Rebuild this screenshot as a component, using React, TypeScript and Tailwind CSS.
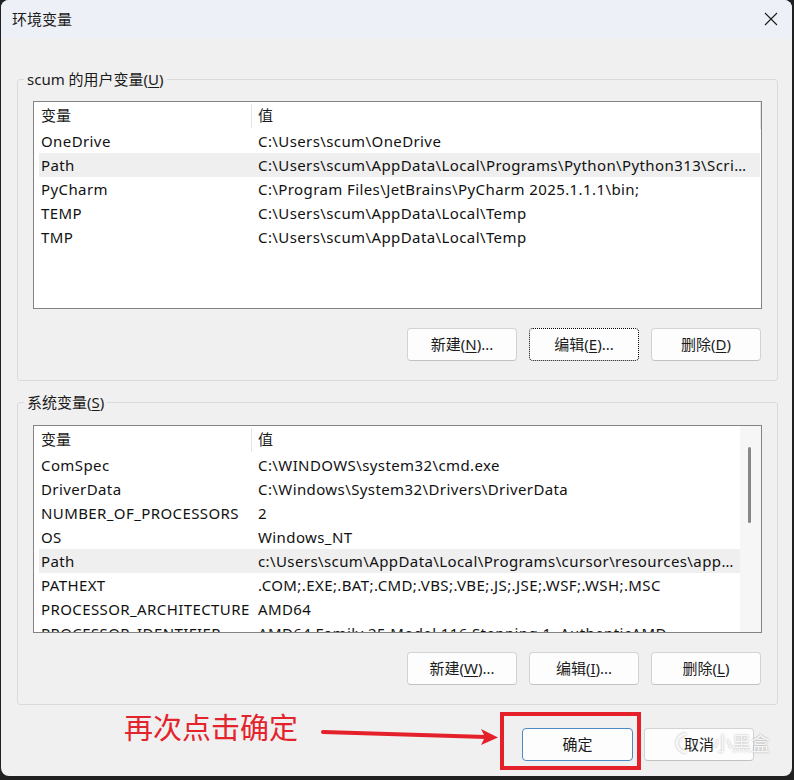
import React from "react";

const F = "font-['Noto_Sans','Noto_Sans_CJK_SC',sans-serif]";

function U({ c }: { c: string }) {
  return <span className="underline underline-offset-2 decoration-1">{c}</span>;
}

function Btn({
  children,
  focus,
  primary,
  w = "w-[110px]",
}: {
  children: React.ReactNode;
  focus?: boolean;
  primary?: boolean;
  w?: string;
}) {
  const border = focus
    ? "border border-dotted border-black"
    : primary
    ? "border border-[#4c8ac4]"
    : "border border-[#d3d3d3] border-b-[#c2c2c2]";
  return (
    <div
      className={`${w} h-[33px] rounded-[4px] bg-[#fdfdfd] ${border} flex items-center justify-center text-[15px] text-[#1b1b1b] leading-none`}
    >
      {children}
    </div>
  );
}

type Row = [string, string];

function ListView({
  rows,
  selected,
  scroll,
}: {
  rows: Row[];
  selected: number;
  scroll?: boolean;
}) {
  return (
    <div className="w-[729px] h-[208px] border border-[#848484] bg-white flex overflow-hidden">
      <div className="flex-1 min-w-0 flex flex-col">
        <div className="h-[27px] shrink-0 flex items-center ml-[5px] text-[15px] text-[#1b1b1b]">
          <div className="w-[212px] pl-[2px] h-full flex items-center">变量</div>
          <div className="w-px h-[24px] bg-[#e5e5e5]" />
          <div className="flex-1 pl-[6px] h-full flex items-center">值</div>
          {!scroll && <div className="w-px h-[27px] bg-[#e5e5e5]" />}
        </div>
        {rows.map((r, i) => (
          <div
            key={i}
            className={`h-[24px] shrink-0 flex items-center ml-[5px] ${scroll ? "" : "mr-[1px]"} text-[15px] tracking-[0.4px] text-[#111] ${
              i === selected ? "bg-[#efefef]" : ""
            }`}
          >
            <div className="w-[217px] pl-[2px] whitespace-nowrap overflow-hidden">{r[0]}</div>
            <div className="flex-1 min-w-0 pl-[2px] pr-[6px] whitespace-nowrap overflow-hidden text-ellipsis">
              {r[1]}
            </div>
          </div>
        ))}
      </div>
      {scroll && (
        <div className="w-[21px] shrink-0 bg-[#f6f6f6]">
          <div className="ml-[8px] mt-[21px] w-[3px] h-[76px] rounded-full bg-[#878787]" />
        </div>
      )}
    </div>
  );
}

function Group({
  label,
  rows,
  selected,
  scroll,
  buttons,
  pt,
}: {
  label: React.ReactNode;
  rows: Row[];
  selected: number;
  scroll?: boolean;
  buttons: React.ReactNode;
  pt: string;
}) {
  return (
    <div className={`relative ml-[16px] w-[761px] border border-[#dadada] rounded-[3px] ${pt} pl-[15px] pb-[19px]`}>
      <div className="absolute -top-[11px] left-[6px] px-[3px] bg-[#f0f0f0] text-[15px] leading-[20px] text-[#1b1b1b]">
        {label}
      </div>
      <ListView rows={rows} selected={selected} scroll={scroll} />
      <div className="flex justify-end gap-[12px] pr-[16px] mt-[19px]">{buttons}</div>
    </div>
  );
}

export default function App() {
  const userRows: Row[] = [
    ["OneDrive", "C:\\Users\\scum\\OneDrive"],
    ["Path", "C:\\Users\\scum\\AppData\\Local\\Programs\\Python\\Python313\\Scripts\\;C:\\Users\\scum\\AppData"],
    ["PyCharm", "C:\\Program Files\\JetBrains\\PyCharm 2025.1.1.1\\bin;"],
    ["TEMP", "C:\\Users\\scum\\AppData\\Local\\Temp"],
    ["TMP", "C:\\Users\\scum\\AppData\\Local\\Temp"],
  ];
  const sysRows: Row[] = [
    ["ComSpec", "C:\\WINDOWS\\system32\\cmd.exe"],
    ["DriverData", "C:\\Windows\\System32\\Drivers\\DriverData"],
    ["NUMBER_OF_PROCESSORS", "2"],
    ["OS", "Windows_NT"],
    ["Path", "c:\\Users\\scum\\AppData\\Local\\Programs\\cursor\\resources\\app\\bin;C:\\Windows"],
    ["PATHEXT", ".COM;.EXE;.BAT;.CMD;.VBS;.VBE;.JS;.JSE;.WSF;.WSH;.MSC"],
    ["PROCESSOR_ARCHITECTURE", "AMD64"],
    ["PROCESSOR_IDENTIFIER", "AMD64 Family 25 Model 116 Stepping 1, AuthenticAMD"],
  ];

  return (
    <div className={`relative w-[794px] h-[780px] bg-[#202020] overflow-hidden ${F}`}>
      <div className="ml-[1px] w-[791px] h-[776px] rounded-[8px] bg-[#f0f0f0] overflow-hidden flex flex-col">
        {/* title bar */}
        <div className="h-[38px] shrink-0 bg-[#eef0f7] flex items-center justify-between pl-[11px] pr-[14px]">
          <span className="text-[15px] text-[#1b1b1b]">环境变量</span>
          <svg width="14" height="14" viewBox="0 0 14 14">
            <path d="M1 1 L13 13 M13 1 L1 13" stroke="#1b1b1b" strokeWidth="1.1" />
          </svg>
        </div>

        <div className="mt-[41px]">
          <Group
            pt="pt-[21px]"
            label={
              <>
                scum 的用户变量(<U c="U" />)
              </>
            }
            rows={userRows}
            selected={1}
            buttons={
              <>
                <Btn>
                  新建(<U c="N" />)...
                </Btn>
                <Btn focus>
                  编辑(<U c="E" />)...
                </Btn>
                <Btn>
                  删除(<U c="D" />)
                </Btn>
              </>
            }
          />
        </div>

        <div className="mt-[21px]">
          <Group
            pt="pt-[22px]"
            label={
              <>
                系统变量(<U c="S" />)
              </>
            }
            rows={sysRows}
            selected={4}
            scroll
            buttons={
              <>
                <Btn>
                  新建(<U c="W" />)...
                </Btn>
                <Btn>
                  编辑(<U c="I" />)...
                </Btn>
                <Btn>
                  删除(<U c="L" />)
                </Btn>
              </>
            }
          />
        </div>

        <div className="flex gap-[11px] pl-[521px] mt-[23px]">
          <Btn primary w="w-[111px]">
            确定
          </Btn>
          <Btn>取消</Btn>
        </div>
      </div>

      {/* annotation overlays */}
      <div className="absolute left-[124px] top-[708px] text-[29px] leading-[36px] text-[#e3242c] font-['Noto_Sans_CJK_SC',sans-serif]">
        再次点击确定
      </div>
      <svg className="absolute left-0 top-0" width="794" height="780" viewBox="0 0 794 780">
        <line x1="323" y1="732" x2="486" y2="737" stroke="#e4202a" strokeWidth="4" strokeLinecap="round" />
        <polygon points="481,729 498,737.5 481,745 485,737" fill="#e4202a" />
        <rect x="502" y="714" width="137" height="54" fill="none" stroke="#e4202a" strokeWidth="4" />
        <path
          d="M686 734 A9 9 0 1 0 686 752"
          fill="none"
          stroke="rgba(255,255,255,0.85)"
          strokeWidth="2.5"
          style={{ filter: "drop-shadow(0 0 1px rgba(0,0,0,0.35))" }}
        />
      </svg>
      <div className="absolute left-[713px] top-[731px] text-[19px] leading-[24px] tracking-[0px] text-white/85 [text-shadow:0_0_2px_rgba(0,0,0,0.35)] font-['Noto_Sans_CJK_SC',sans-serif]">
        小黑盒
      </div>
    </div>
  );
}
